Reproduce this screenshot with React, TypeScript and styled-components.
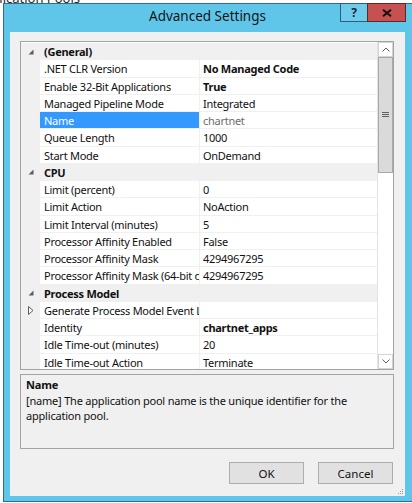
// Advanced Settings dialog (IIS application pool)
import React from "react";
import styled, { createGlobalStyle } from "styled-components";

const uiFont = `"Segoe UI", "Noto Sans", "Open Sans", sans-serif`;

interface iProperty {
  name: string;
  value: string;
  bold?: boolean;
  muted?: boolean;
  selected?: boolean;
  collapsed?: boolean;
}

interface iCategory {
  title: string;
  items: iProperty[];
}

const categories: iCategory[] = [
  {
    title: "(General)",
    items: [
      { name: ".NET CLR Version", value: "No Managed Code", bold: true },
      { name: "Enable 32-Bit Applications", value: "True", bold: true },
      { name: "Managed Pipeline Mode", value: "Integrated" },
      { name: "Name", value: "chartnet", muted: true, selected: true },
      { name: "Queue Length", value: "1000" },
      { name: "Start Mode", value: "OnDemand" },
    ],
  },
  {
    title: "CPU",
    items: [
      { name: "Limit (percent)", value: "0" },
      { name: "Limit Action", value: "NoAction" },
      { name: "Limit Interval (minutes)", value: "5" },
      { name: "Processor Affinity Enabled", value: "False" },
      { name: "Processor Affinity Mask", value: "4294967295" },
      { name: "Processor Affinity Mask (64-bit option)", value: "4294967295" },
    ],
  },
  {
    title: "Process Model",
    items: [
      { name: "Generate Process Model Event Log Entry", value: "", collapsed: true },
      { name: "Identity", value: "chartnet_apps", bold: true },
      { name: "Idle Time-out (minutes)", value: "20" },
      { name: "Idle Time-out Action", value: "Terminate" },
    ],
  },
];

export default function App() {
  return (
    <>
      <GlobalStyle />
      <Desktop>
        <BackTitle>Application Pools</BackTitle>

        <Dialog>
          <TitleBar>
            <span />
            <TitleText>Advanced Settings</TitleText>
            <CaptionButtons>
              <HelpButton type="button">?</HelpButton>
              <CloseButton type="button">
                <svg width="10" height="8" viewBox="0 0 10 8">
                  <path d="M1 0.8 L9 7.2 M9 0.8 L1 7.2" stroke="#111" strokeWidth="2" />
                </svg>
              </CloseButton>
            </CaptionButtons>
          </TitleBar>

          <ClientArea>
            <PropertyGrid>
              <RowsPane>
                {categories.map((cat) => (
                  <React.Fragment key={cat.title}>
                    <CategoryRow>
                      <Gutter>
                        <svg width="6" height="6" viewBox="0 0 6 6">
                          <path d="M5.5 0.5 L5.5 5.5 L0.5 5.5 Z" fill="#5c5c5c" />
                        </svg>
                      </Gutter>
                      <CategoryTitle>{cat.title}</CategoryTitle>
                    </CategoryRow>
                    {cat.items.map((item) => (
                      <PropertyRow key={item.name}>
                        <Gutter>
                          {item.collapsed && (
                            <svg width="6" height="9" viewBox="0 0 6 9">
                              <path d="M0.5 0.5 L5 4.5 L0.5 8.5 Z" fill="#fff" stroke="#5c5c5c" />
                            </svg>
                          )}
                        </Gutter>
                        <NameCell $selected={item.selected}>{item.name}</NameCell>
                        <ValueCell $bold={item.bold} $muted={item.muted}>
                          {item.value}
                        </ValueCell>
                      </PropertyRow>
                    ))}
                  </React.Fragment>
                ))}
              </RowsPane>

              <ScrollBar>
                <ScrollArrow>
                  <svg width="8" height="5" viewBox="0 0 8 5">
                    <path d="M0.5 4.5 L4 1 L7.5 4.5" fill="none" stroke="#606060" />
                  </svg>
                </ScrollArrow>
                <ScrollThumb>
                  <svg width="7" height="6" viewBox="0 0 7 6">
                    <path d="M0 0.5 H7 M0 2.5 H7 M0 4.5 H7" stroke="#606060" />
                  </svg>
                </ScrollThumb>
                <ScrollTrack />
                <ScrollArrow>
                  <svg width="8" height="5" viewBox="0 0 8 5">
                    <path d="M0.5 0.5 L4 4 L7.5 0.5" fill="none" stroke="#606060" />
                  </svg>
                </ScrollArrow>
              </ScrollBar>
            </PropertyGrid>

            <DescriptionPanel>
              <DescriptionTitle>Name</DescriptionTitle>
              <DescriptionText>
                [name] The application pool name is the unique identifier for the
                <br />
                application pool.
              </DescriptionText>
            </DescriptionPanel>

            <ButtonRow>
              <DialogButton type="button">OK</DialogButton>
              <DialogButton type="button">Cancel</DialogButton>
            </ButtonRow>

            <SizeGrip width="7" height="7" viewBox="0 0 7 7">
              <rect x="5" y="1" width="1" height="1" fill="#9a9a9a" />
              <rect x="3" y="3" width="1" height="1" fill="#9a9a9a" />
              <rect x="5" y="3" width="1" height="1" fill="#9a9a9a" />
              <rect x="1" y="5" width="1" height="1" fill="#9a9a9a" />
              <rect x="3" y="5" width="1" height="1" fill="#9a9a9a" />
              <rect x="5" y="5" width="1" height="1" fill="#9a9a9a" />
            </SizeGrip>
          </ClientArea>
        </Dialog>
      </Desktop>
    </>
  );
}

const GlobalStyle = createGlobalStyle`
  html, body {
    margin: 0;
    padding: 0;
    background: #ffffff;
    overflow: hidden;
  }

  * {
    box-sizing: border-box;
  }
`;

const Desktop = styled.div`
  position: relative;
  width: 412px;
  height: 503px;
  overflow: hidden;
  background-color: #ffffff;

  font-family: ${uiFont};
`;

const BackTitle = styled.div`
  position: absolute;
  left: -25px;
  top: -11px;

  font-size: 13px;
  color: #2a2a2a;
`;

const Dialog = styled.section`
  position: absolute;
  left: 3px;
  top: 3px;

  width: 410px;
  height: 499px;

  border: 1px solid #2f6f8e;
  background-color: #5fc6ea;

  padding: 0 7px 5px 6px;

  display: flex;
  flex-direction: column;
`;

const TitleBar = styled.header`
  height: 28px;

  display: grid;
  grid-template-columns: 1fr auto 1fr;
  align-items: start;
`;

const TitleText = styled.h1`
  margin: 0;

  font-size: 13.5px;
  font-weight: 400;
  line-height: 25px;
  color: #141414;
`;

const CaptionButtons = styled.div`
  justify-self: end;

  margin-top: -1px;
  margin-right: -1px;

  display: flex;
`;

const HelpButton = styled.button`
  width: 27px;
  height: 19px;

  padding: 0;
  border: 1px solid #2d5f78;
  border-right: none;

  background-color: #6fcbec;

  font-family: ${uiFont};
  font-size: 12px;
  font-weight: 700;
  color: #13283a;
  line-height: 16px;
`;

const CloseButton = styled.button`
  width: 39px;
  height: 19px;

  padding: 0;
  border: 1px solid #5a2a2a;

  background-color: #c75050;

  display: flex;
  align-items: center;
  justify-content: center;
`;

const ClientArea = styled.div`
  position: relative;
  flex: 1;

  background-color: #f0f0f0;

  padding: 9px 11px 0 10px;

  display: flex;
  flex-direction: column;
`;

const PropertyGrid = styled.div`
  height: 329px;

  border: 1px solid #a3a3a3;
  background-color: #ffffff;

  display: flex;
  overflow: hidden;
`;

const RowsPane = styled.div`
  flex: 1;
  min-width: 0;

  padding-top: 1px;

  display: flex;
  flex-direction: column;
  overflow: hidden;
`;

const rowBase = `
  flex: 0 0 17.25px;
  height: 17.25px;

  display: grid;
  grid-template-columns: 19px 160px 1fr;

  font-size: 11px;
  letter-spacing: -0.27px;
  line-height: 17px;
  color: #111111;
`;

const CategoryRow = styled.div`
  ${rowBase}
  background-color: #f0f0f0;
`;

const PropertyRow = styled.div`
  ${rowBase}
`;

const Gutter = styled.div`
  background-color: #f0f0f0;

  padding-left: 7px;

  display: flex;
  align-items: center;
`;

const CategoryTitle = styled.div`
  grid-column: 2 / 4;

  padding-left: 4px;

  font-weight: 700;
`;

const NameCell = styled.div<{ $selected?: boolean }>`
  padding-left: 4px;

  border-bottom: 1px solid #f0f0f0;
  border-right: 1px solid #f0f0f0;

  background-color: ${(p) => (p.$selected ? "#3399ff" : "transparent")};
  color: ${(p) => (p.$selected ? "#ffffff" : "inherit")};

  white-space: nowrap;
  overflow: hidden;
`;

const ValueCell = styled.div<{ $bold?: boolean; $muted?: boolean }>`
  padding-left: 3px;

  border-bottom: 1px solid #f0f0f0;

  font-weight: ${(p) => (p.$bold ? 700 : 400)};
  color: ${(p) => (p.$muted ? "#6d6d6d" : "inherit")};

  white-space: nowrap;
  overflow: hidden;
`;

const ScrollBar = styled.div`
  width: 16px;

  border-left: 1px solid #e3e3e3;
  background-color: #ffffff;

  display: flex;
  flex-direction: column;
`;

const ScrollArrow = styled.div`
  height: 15px;

  border: 1px solid #d4d4d4;
  background-color: #ffffff;

  display: flex;
  align-items: center;
  justify-content: center;
`;

const ScrollThumb = styled.div`
  height: 116px;

  border: 1px solid #a8a8a8;
  background-color: #dadada;

  display: flex;
  align-items: center;
  justify-content: center;
`;

const ScrollTrack = styled.div`
  flex: 1;
`;

const DescriptionPanel = styled.div`
  height: 75px;

  margin-top: 4px;
  padding: 2px 5px;

  border: 1px solid #a3a3a3;
  background-color: #f0f0f0;

  font-size: 11px;
  letter-spacing: -0.2px;
  line-height: 15px;
  color: #111111;
`;

const DescriptionTitle = styled.div`
  font-weight: 700;
  margin-bottom: 1px;
`;

const DescriptionText = styled.p`
  margin: 0;
`;

const ButtonRow = styled.div`
  margin-top: 13px;
  padding-right: 1px;

  display: flex;
  justify-content: flex-end;
  gap: 14px;
`;

const DialogButton = styled.button`
  width: 75px;
  height: 22px;

  padding: 0;
  border: 1px solid #adadad;
  background-color: #e1e1e1;

  font-family: ${uiFont};
  font-size: 11.5px;
  color: #111111;
`;

const SizeGrip = styled.svg`
  position: absolute;
  right: 1px;
  bottom: 1px;
`;
